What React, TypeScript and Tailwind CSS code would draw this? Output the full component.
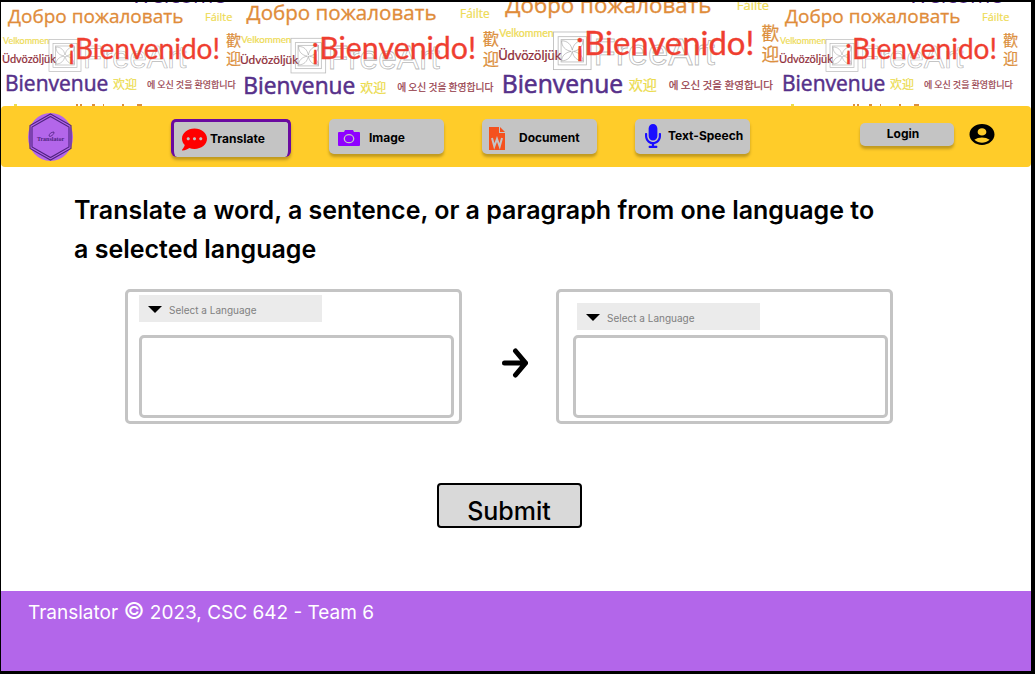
import type { ReactNode } from "react";
import { FaCommentDots, FaMicrophone } from "react-icons/fa";
import { MdAccountCircle } from "react-icons/md";

function WelcomeTile({ viewBox, className }: { viewBox: string; className: string }) {
  return (
    <svg
      viewBox={viewBox}
      preserveAspectRatio="xMinYMin slice"
      className={`h-[104px] min-w-0 basis-0 overflow-visible font-['Open_Sans','Noto_Sans_CJK_SC',sans-serif] ${className}`}
    >
      <text x="130" y="3" fontSize="22" fill="#56308a">Welcome</text>
      <text x="7" y="23" fontSize="19" fill="#e08c3a" stroke="#e08c3a" strokeWidth="0.300">Добро пожаловать</text>
      <text x="204" y="21" fontSize="11" fill="#eedb55" stroke="#eedb55" strokeWidth="0.200">Fáilte</text>
      <text x="2" y="44" fontSize="9" fill="#eedb55" stroke="#eedb55" strokeWidth="0.200" className="font-['Lato',sans-serif]">
        Velkommen
      </text>
      <text x="1" y="63" fontSize="11" fill="#8f2c38" stroke="#8f2c38" strokeWidth="0.200" className="font-['Lato',sans-serif]">
        Üdvözöljük
      </text>
      <g fill="none" stroke="#8a8a8a" strokeOpacity="0.6" strokeWidth="0.700">
        <rect x="48" y="39.500" width="32" height="32" />
        <rect x="52" y="43.500" width="24" height="24" />
        <rect x="54.500" y="46" width="19" height="19" />
        <path d="M55 47c5 0 8 3 9 8 1-5 4-8 9-8 0 5-3 8-8 9 5 1 8 4 8 8-5 0-8-3-9-8-1 5-4 8-9 8 0-4 3-7 8-8-5-1-8-4-8-9z" />
        <text x="82" y="68" fontSize="31" className="font-['Liberation_Sans',sans-serif]">FreeArt</text>
      </g>
      <text x="67" y="59" fontSize="28" fill="#ef3e30" stroke="#ef3e30" strokeWidth="0.300" className="font-['Lato',sans-serif]">
        ¡Bienvenido!
      </text>
      <text x="225" y="46" fontSize="15" fill="#dc9040" stroke="#dc9040" strokeWidth="0.200">歡</text>
      <text x="225" y="64" fontSize="15" fill="#dc9040" stroke="#dc9040" strokeWidth="0.200">迎</text>
      <text x="4" y="91" fontSize="21" fill="#56308a" stroke="#56308a" strokeWidth="0.500">Bienvenue</text>
      <text x="112" y="89" fontSize="12" fill="#ecdc4e" stroke="#ecdc4e" strokeWidth="0.200">欢迎</text>
      <text x="146" y="88" fontSize="9" fill="#97404c" stroke="#97404c" strokeWidth="0.200" className="font-['Noto_Sans_CJK_KR',sans-serif]">
        에 오신 것을 환영합니다
      </text>
      <path d="M13 104h3v2h-3z" fill="#ecdc4e" />
      <path d="M75 104h2v2h-2zM79 104h2v2h-2zM91 104h3v2h-3zM102 104h1v2h-1zM121 104h2v2h-2zM136 104h5v2h-5z" fill="#dc9040" />
    </svg>
  );
}

function Banner() {
  return (
    <div className="flex h-[104px] overflow-hidden bg-white">
      <WelcomeTile viewBox="0 2 238 104" className="grow-[238]" />
      <WelcomeTile viewBox="0 6 239 96" className="grow-[258]" />
      <WelcomeTile viewBox="0 14 239 89" className="grow-[281]" />
      <WelcomeTile viewBox="0 2 253 104" className="grow-[253]" />
    </div>
  );
}

function Logo() {
  return (
    <svg viewBox="0 0 45 48" className="h-12 w-[45px] shrink-0" role="img" aria-label="Translator">
      <ellipse cx="22.500" cy="24" rx="22.500" ry="24" fill="#b366ea" />
      <g fill="none" stroke="#4f2380" strokeWidth="1.100">
        <path d="M22.500 1 43 12.500v23L22.500 47 2 35.500v-23z" />
        <path d="M22.500 3.500 41 14v20L22.500 44.500 4 34V14z" />
      </g>
      <path d="M21 23c0-2 2-4 5-4 0 2-1 3-2 3 0 1-2 2-3 1z" fill="none" stroke="#4f2380" strokeWidth="0.800" />
      <text x="22.500" y="28" textAnchor="middle" fontSize="6" fontWeight="700" fill="#4f2380" className="font-['Liberation_Serif',serif]">
        Translator
      </text>
    </svg>
  );
}

function CameraIcon() {
  return (
    <svg viewBox="0 0 22 16" className="h-4 w-[22px]" aria-hidden="true">
      <path d="M1 2h5l1-2h8l1 2h5a1 1 0 0 1 1 1v12a1 1 0 0 1-1 1H1a1 1 0 0 1-1-1V3a1 1 0 0 1 1-1z" fill="#8f00ff" />
      <ellipse cx="11" cy="8.700" rx="4.700" ry="4" fill="none" stroke="#c4c4c4" strokeWidth="1.300" />
    </svg>
  );
}

function WordFileIcon() {
  return (
    <svg viewBox="0 0 16 23" className="h-[23px] w-4" aria-hidden="true">
      <path d="M0 0h10v6h6v17H0z" fill="#f4511e" />
      <path d="M11 0l5 5h-5z" fill="#f4511e" />
      <path d="M3 11l2.300 8.500L8 12l2.700 7.500L13 11" fill="none" stroke="#c4c4c4" strokeWidth="2" />
    </svg>
  );
}

function NavButton({ children, className }: { children: ReactNode; className: string }) {
  return (
    <button
      type="button"
      className={`flex items-center rounded-[5px] bg-[#c4c4c4] text-[12px] font-bold text-black shadow-[0_3px_3px_rgba(0,0,0,0.25)] ${className}`}
    >
      {children}
    </button>
  );
}

function NavBar() {
  return (
    <header className="flex h-[61px] items-center rounded-[4px] bg-[#ffcc29] pr-[34px] pl-[27px]">
      <Logo />
      <nav className="ml-[98px] flex items-start gap-[38px] pt-[2px]">
        <NavButton className="h-[38px] w-[120px] gap-[3px] rounded-b-[6px] border-x-[3px] border-t-[3px] border-[#6a0aa0] pl-2">
          <FaCommentDots className="size-[25px] text-[#ff0000]" preserveAspectRatio="none" />
          Translate
        </NavButton>
        <NavButton className="h-[35px] w-[115px] gap-[9px] pt-1 pl-[9px]">
          <CameraIcon />
          Image
        </NavButton>
        <NavButton className="h-[35px] w-[115px] gap-[14px] pt-1 pl-[7px]">
          <WordFileIcon />
          Document
        </NavButton>
        <NavButton className="h-[35px] w-[115px] gap-[7px] pl-[10px]">
          <FaMicrophone className="h-6 w-4 text-[#1a0dff]" preserveAspectRatio="none" />
          Text-Speech
        </NavButton>
      </nav>
      <div className="ml-auto flex items-center gap-[13px] pb-[5px]">
        <NavButton className="h-[23px] w-[94px] justify-center pr-2">Login</NavButton>
        <button type="button" aria-label="Account">
          <MdAccountCircle className="h-[25px] w-[30px]" preserveAspectRatio="none" />
        </button>
      </div>
    </header>
  );
}

function LanguagePanel({ name, className, pickerClassName, readOnly }: {
  name: string;
  className: string;
  pickerClassName: string;
  readOnly?: boolean;
}) {
  return (
    <section className={`h-[135px] w-[337px] rounded-[5px] border-3 border-[#c4c4c4] ${className}`}>
      <div className={`h-[43px] ${pickerClassName}`}>
        <div className="relative w-[183px]">
          <select
            aria-label={`${name} language`}
            className="block h-[27px] w-full appearance-none bg-[#ebebeb] pt-[3px] pl-[30px] text-[10px] text-[#808080]"
          >
            <option>Select a Language</option>
          </select>
          <svg viewBox="0 0 14 7" className="pointer-events-none absolute top-[11px] left-[9px] h-[7px] w-[14px]" aria-hidden="true">
            <path d="M0 0h14L7 7z" />
          </svg>
        </div>
      </div>
      <textarea
        aria-label={`${name} text`}
        readOnly={readOnly}
        className="block h-[83px] w-[315px] resize-none rounded-[5px] border-3 border-[#c4c4c4] p-2 text-sm"
      />
    </section>
  );
}

export default function App() {
  return (
    <div className="flex min-h-screen flex-col bg-black pt-[2px] pr-1 pb-[3px] pl-px font-['Inter',sans-serif] text-black">
      <div className="flex flex-1 flex-col bg-white">
        <Banner />
        <NavBar />
        <main className="flex flex-1 flex-col px-[73px] pt-6">
          <h1 className="max-w-[820px] text-[25px] leading-[39px] font-semibold">
            Translate a word, a sentence, or a paragraph from one language to a selected language
          </h1>
          <div className="mt-5 ml-[51px] flex w-fit flex-col items-center">
            <div className="flex items-center">
              <LanguagePanel name="Source" className="pl-[11px]" pickerClassName="pt-[3px]" />
              <svg viewBox="0 0 26 30" className="mt-3 mr-7 ml-10 h-[30px] w-[26px] shrink-0" aria-label="to" role="img">
                <path d="M2.500 15H23M13.500 3 23.500 15 13.500 27" fill="none" stroke="black" strokeWidth="5" strokeLinecap="round" />
              </svg>
              <LanguagePanel name="Target" className="pl-[14px]" pickerClassName="pt-[11px] pl-1" readOnly />
            </div>
            <button
              type="button"
              className="mt-[59px] mb-[62px] h-[45px] w-[145px] rounded-[4px] border-2 border-black bg-[#d9d9d9] pt-[10px] text-[25px] leading-[30px] font-medium"
            >
              Submit
            </button>
          </div>
        </main>
        <footer className="h-20 bg-[#b366ea] px-[27px] pt-2 text-[19px] leading-7 text-white">
          Translator <span className="text-[23px] leading-none">©</span> 2023, CSC 642 - Team 6
        </footer>
      </div>
    </div>
  );
}
